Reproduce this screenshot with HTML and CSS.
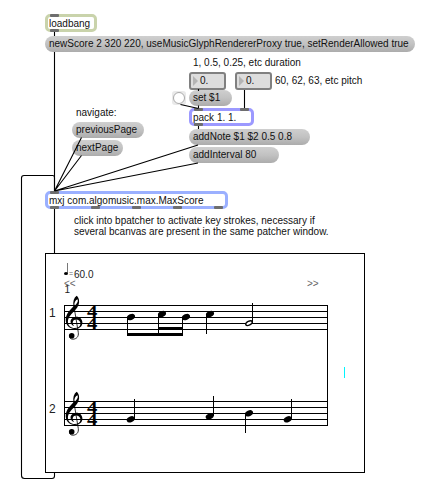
FILE: index.html
```html
<!DOCTYPE html>
<html lang="en">
<head>
<meta charset="utf-8">
<title>MaxScore patcher</title>
<link rel="stylesheet" href="styles.css">
</head>
<body>
<main class="patcher">
  <div class="node object loadbang">loadbang</div>
  <div class="node message new-score">newScore 2 320 220, useMusicGlyphRendererProxy true, setRenderAllowed true</div>
  <div class="node comment duration-note">1, 0.5, 0.25, etc duration</div>
  <div class="node number duration">0.</div>
  <div class="node number pitch">0.</div>
  <div class="node comment pitch-note">60, 62, 63, etc pitch</div>
  <div class="node bang"></div>
  <div class="node message set">set $1</div>
  <div class="node object pack">pack 1. 1.</div>
  <div class="node message add-note">addNote $1 $2 0.5 0.8</div>
  <div class="node message add-interval">addInterval 80</div>
  <div class="node comment navigate">navigate:</div>
  <div class="node message previous">previousPage</div>
  <div class="node message next">nextPage</div>
  <div class="node object maxscore">mxj com.algomusic.max.MaxScore</div>
  <div class="node comment help">click into bpatcher to activate key strokes, necessary if<br>several bcanvas are present in the same patcher window.</div>

  <svg class="cords" width="425" height="488" viewBox="0 0 425 488">
    <g class="ports">
      <rect x="50" y="14" width="9" height="3" rx="1"/><rect x="50" y="29" width="9" height="3" rx="1"/>
      <rect x="194" y="108" width="9" height="3" rx="1"/><rect x="240" y="108" width="9" height="3" rx="1"/>
      <rect x="194" y="123" width="9" height="3" rx="1"/>
      <rect x="50" y="191" width="9" height="3" rx="1"/>
      <rect x="50" y="206" width="9" height="3" rx="1"/><rect x="91" y="206" width="9" height="3" rx="1"/>
      <rect x="132" y="206" width="9" height="3" rx="1"/><rect x="173" y="206" width="9" height="3" rx="1"/>
      <rect x="214" y="206" width="9" height="3" rx="1"/>
    </g>
    <g class="cord">
      <path d="M54.5 32V36M54.5 52V191M54.5 209V253"/>
      <path d="M54.5 191V177.500Q54.500 175.500 52.500 175.500H24Q21.500 175.500 21.500 178V475.500Q21.500 478.500 24.500 478.500H52Q54.500 478.500 54.500 476V473"/>
      <path d="M81.500 137.500L54.500 191M81.500 155.500L54.500 191M198 145L54.500 191M198 163L54.500 191"/>
      <path d="M198.500 89V91M198.500 105.500V108M198.500 126V129M244.500 90V108M180.500 104.500L198.500 108.500"/>
    </g>
  </svg>

  <svg class="node score" width="320" height="220" viewBox="45 253 320 220">
    <defs>
      <g id="clef">
        <path d="M14.700 -0.300C11.800 1.700 10.700 5.500 11.500 10.300C8 14 3.600 18.300 3.700 24C3.800 29.500 8 33.200 13 33C17.600 32.800 20.500 30.200 20.400 26.500C20.300 22.900 17.700 20.600 14.300 20.700C10.700 20.800 8.300 23.300 8.600 26C8.800 28 10 29.500 12.200 30C11 28.700 10.400 27.600 10.800 26C11.300 24.200 13 23.400 14.700 23.600C17 23.900 18.600 25.600 18.400 27.900C18.200 30.500 16 32 12.700 32C8.600 32 5.900 29.400 5.900 25.700C5.900 21 10 17.300 13.100 14.200C16.200 11 17.600 7.500 17 4C16.700 2.300 15.800 .5 14.700 -0.300ZM15.400 3.200C16.600 5.200 15 7.700 12.500 9.600C12 6.700 13.300 4.200 15.400 3.200Z"/>
        <path class="clef-tail" d="M11.800 9.500L16.300 36.500C16.900 40.500 14.500 43.200 10.800 43.200C9.300 43.200 8 42.400 7.600 41"/>
        <circle cx="9.700" cy="39.700" r="2.800"/>
      </g>
      <ellipse id="head" rx="4.200" ry="2.900" transform="rotate(-24)"/>
      <path id="staff" d="M64 .5H328M64 6.500H328M64 12.500H328M64 18.500H328M64 24.500H328"/>
    </defs>
    <rect class="frame" x="45.500" y="253.500" width="319" height="219"/>
    <g class="ink-line">
      <use href="#staff" y="305"/><use href="#staff" y="401"/>
      <path d="M64.500 305V426M327.500 305V426"/>
      <path d="M127.500 317V334M158.500 314V334M182.500 317V334M206.500 314V334M252.500 303V323"/>
      <path d="M134.500 399V419M213.500 396V416M245.500 413V433M291.500 399V419"/>
    </g>
    <path d="M127 333H183V336H127ZM158 327H183V330H158Z"/>
    <use href="#head" x="131" y="317"/><use href="#head" x="162" y="314"/><use href="#head" x="186" y="317"/><use href="#head" x="210" y="314"/>
    <ellipse class="half" rx="3.500" ry="1.900" transform="translate(249 323.200) rotate(-24)"/>
    <use href="#head" x="130.700" y="419.300"/><use href="#head" x="209.700" y="416.300"/><use href="#head" x="249" y="413.300"/><use href="#head" x="287.700" y="419.300"/>
    <use href="#clef" x="62" y="296"/><use href="#clef" x="62" y="392"/>
    <g class="meter">
      <text transform="translate(87 317) scale(1.22 1)">4</text><text transform="translate(87 329) scale(1.22 1)">4</text>
      <text transform="translate(87 413) scale(1.22 1)">4</text><text transform="translate(87 425) scale(1.22 1)">4</text>
    </g>
    <path class="tempo-stem" d="M67.500 263V273"/>
    <ellipse cx="66" cy="273.500" rx="2" ry="1.500"/>
    <g class="labels">
      <text class="thin" x="69" y="276" font-size="7">=</text><text x="74" y="278">60.0</text>
      <text class="thin" x="64" y="287">&lt;&lt;</text><text x="64.500" y="293">1</text>
      <text class="thin" x="307" y="287">&gt;&gt;</text>
      <text class="part" x="49" y="317">1</text><text class="part" x="49" y="413">2</text>
    </g>
    <path class="cursor" d="M344.500 367V378"/>
  </svg>
</main>
</body>
</html>
```
FILE: styles.css
```css
body { margin: 0; background: #fff; }
.patcher { position: relative; width: 425px; height: 488px; overflow: hidden; font: 10px/12px "Liberation Sans", Arial, sans-serif; color: #111; }
.node { position: absolute; box-sizing: border-box; white-space: nowrap; }
.object { height: 18px; padding: 1px 0 0 1px; border: 3px solid #98a8ff; border-radius: 5px; line-height: 12px; background: #fff; }
.message { height: 16px; padding: 2px 0 0 4px; border-radius: 8px; background: linear-gradient(#cfcfcf, #c2c2c2 50%, #acacac); }
.number { width: 37px; height: 18px; padding: 1px 0 0 9px; border: 2px solid #808080; border-radius: 3px; background: #ddd; }
.number::before { content: ""; position: absolute; left: 2px; top: 2px; border: 5px solid transparent; border-left-color: #b4b4b4; border-right: 0; }
.bang { left: 172px; top: 91px; width: 14px; height: 14px; border-radius: 3px; background: #e9e9e9; }
.bang::before { content: ""; position: absolute; inset: 1px; border: 1px solid #aaa; border-radius: 50%; background: #fff; }
.loadbang { left: 45px; top: 14px; width: 52px; border-color: #c9d3ab; }
.new-score { left: 45px; top: 36px; width: 370px; }
.duration-note { left: 193px; top: 57px; }
.duration { left: 189px; top: 72px; }
.pitch { left: 235px; top: 72px; }
.pitch-note { left: 275px; top: 75px; }
.set { left: 189px; top: 90px; width: 43px; }
.pack { left: 189px; top: 108px; width: 65px; border-color: #9c99ff; }
.add-note { left: 189px; top: 129px; width: 121px; }
.add-interval { left: 189px; top: 147px; width: 90px; }
.navigate { left: 76px; top: 107px; }
.previous { left: 72px; top: 122px; width: 72px; }
.next { left: 72px; top: 140px; width: 51px; }
.maxscore { left: 45px; top: 191px; width: 183px; border-color: #9bb0ff; }
.help { left: 74px; top: 215px; line-height: 11px; }
.cords { position: absolute; inset: 0; }
.ports { fill: #6e6e6e; }
.cord { fill: none; stroke: #000; stroke-width: 1.1; }
.score { left: 45px; top: 253px; }
.frame { fill: none; stroke: #000; }
.ink-line { fill: none; stroke: #000; stroke-width: 1; }
.clef-tail { fill: none; stroke: #000; stroke-width: .8; }
.half { fill: #fff; stroke: #000; stroke-width: 1.4; }
.meter { font: bold 17px "Liberation Serif", serif; }
.tempo-stem { stroke: #777; }
.labels { font-size: 10px; fill: #222; }
.labels .thin { fill: #666; }
.labels .part { font-size: 12px; }
.cursor { stroke: #00f5ff; }
```
